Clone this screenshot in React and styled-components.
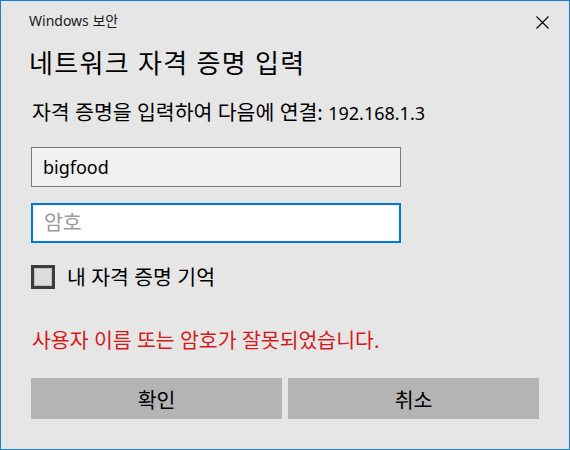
import React, { useState } from 'react'
import styled, { createGlobalStyle } from 'styled-components'

const GlobalStyle = createGlobalStyle`
  html, body {
    margin: 0;
    padding: 0;
    background: #e6e6e6;
  }
  * {
    box-sizing: border-box;
  }
`;

const font = `"Noto Sans", "Noto Sans CJK KR", sans-serif`;

const CredentialDialog = () => {
  const [remember, setRemember] = useState(false);

  return (
    <Dialog>
      <TitleBar>
        <Caption>Windows 보안</Caption>
        <CloseButton aria-label="닫기">
          <svg width="13" height="13" viewBox="0 0 13 13">
            <path d="M0.5 0.5 L12.5 12.5 M12.5 0.5 L0.5 12.5" stroke="#000" strokeWidth="1.1" fill="none" />
          </svg>
        </CloseButton>
      </TitleBar>
      <Heading>네트워크 자격 증명 입력</Heading>
      <Message>자격 증명을 입력하여 다음에 연결: <Host>192.168.1.3</Host></Message>
      <Fields>
        <TextBox defaultValue="bigfood" />
        <TextBox type="password" placeholder="암호" $focused />
      </Fields>
      <CheckRow onClick={() => setRemember(!remember)}>
        <CheckBox $checked={remember} />
        <span>내 자격 증명 기억</span>
      </CheckRow>
      <ErrorText>사용자 이름 또는 암호가 잘못되었습니다.</ErrorText>
      <Buttons>
        <Button>확인</Button>
        <Button>취소</Button>
      </Buttons>
    </Dialog>
  )
}

export default function App() {
  return (
    <>
      <GlobalStyle />
      <CredentialDialog />
    </>
  )
}

const Dialog = styled.div`
  width: 570px;
  height: 450px;
  border: 1px solid #1a7fd4;
  background: #e6e6e6;
  padding: 0 30px;
  font-family: ${font};
  color: #000;
  display: flex;
  flex-direction: column;
`;

const TitleBar = styled.div`
  display: flex;
  align-items: center;
  justify-content: space-between;
  height: 40px;
  margin-right: -13px;
`;

const Caption = styled.span`
  font-size: 14px;
  line-height: 20px;
  color: #1a1a1a;
  margin-left: -2px;
`;

const CloseButton = styled.button`
  border: none;
  background: transparent;
  width: 20px;
  height: 30px;
  padding: 0;
  display: flex;
  align-items: center;
  justify-content: center;
  margin-top: 2px;
`;

const Heading = styled.h1`
  margin: 6px 0 0 -2px;
  font-size: 26px;
  font-weight: 400;
  line-height: 32px;
  letter-spacing: 1.3px;
`;

const Message = styled.p`
  margin: 22px 0 0 1px;
  font-size: 20.5px;
  line-height: 22px;
`;

const Host = styled.span`
  font-size: 18px;
`;

const Fields = styled.div`
  display: flex;
  flex-direction: column;
  gap: 16px;
  margin-top: 23px;
`;

const TextBox = styled.input`
  width: 370px;
  height: 40px;
  padding: 0 11px;
  font-family: ${font};
  font-size: 18px;
  color: #000;
  background: ${p => (p.$focused ? '#fff' : '#f0f0f0')};
  border: ${p => (p.$focused ? '2px solid #0078d7' : '1px solid #7a7a7a')};
  outline: none;
  &::placeholder {
    color: #9a9a9a;
    font-size: 20.5px;
  }
`;

const CheckRow = styled.label`
  display: flex;
  align-items: center;
  gap: 12px;
  margin-top: 22px;
  font-size: 20.5px;
  line-height: 24px;
  cursor: pointer;
`;

const CheckBox = styled.span`
  width: 24px;
  height: 24px;
  border: 3px solid #3c3c3c;
  background: ${p => (p.$checked ? '#0078d7' : '#dcdcdc')};
  box-shadow: inset 0 0 0 1px #bdbdbd;
`;

const ErrorText = styled.p`
  margin: 39px 0 0 1px;
  font-size: 20.5px;
  line-height: 24px;
  color: #d31b1b;
`;

const Buttons = styled.div`
  display: grid;
  grid-template-columns: 1fr 1fr;
  gap: 6px;
  margin-top: 26px;
`;

const Button = styled.button`
  height: 41px;
  border: none;
  background: #b4b4b4;
  font-family: ${font};
  font-size: 20.5px;
  color: #000;
`;
